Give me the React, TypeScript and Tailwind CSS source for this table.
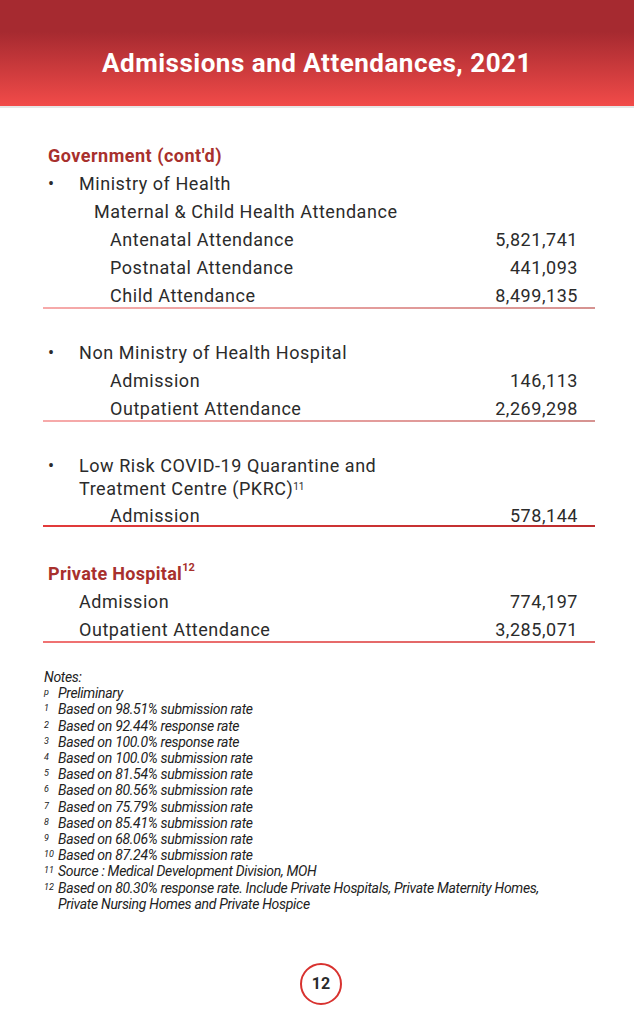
import React from "react"

const ROW = "flex h-[28px] items-center justify-between"

type Line = "soft" | "red" | "rose"

const LINE_CLASS: Record<Line, string> = {
  soft: "-mt-[2px] h-[2px] w-full bg-gradient-to-r from-[#f7aaaa] to-[#d69391]",
  red: "-mt-[2px] h-[2px] w-full bg-gradient-to-r from-[#e33b3b] to-[#bb2d2e]",
  rose: "-mt-[2px] h-[2px] w-full bg-gradient-to-r from-[#f07272] to-[#de6464]",
}

const Row = ({ label, value, indent }: { label: string; value: string; indent: string }) => (
  <div className={ROW}>
    <span className={indent}>{label}</span>
    <span className="pr-[17px]">{value}</span>
  </div>
)

const Bullet = ({ children }: { children: React.ReactNode }) => (
  <div className="flex">
    <span className="w-[36px] shrink-0 pl-[5px]">•</span>
    <span>{children}</span>
  </div>
)

const notes: [string, string][] = [
  ["p", "Preliminary"],
  ["1", "Based on 98.51% submission rate"],
  ["2", "Based on  92.44% response rate"],
  ["3", "Based on 100.0% response rate"],
  ["4", "Based on 100.0% submission rate"],
  ["5", "Based on 81.54% submission rate"],
  ["6", "Based on 80.56% submission rate"],
  ["7", "Based on 75.79% submission rate"],
  ["8", "Based on 85.41% submission rate"],
  ["9", "Based on 68.06% submission rate"],
  ["10", "Based on 87.24% submission rate"],
  ["11", "Source : Medical Development Division, MOH"],
  [
    "12",
    "Based on 80.30% response rate. Include Private Hospitals, Private Maternity Homes, Private Nursing Homes and Private Hospice",
  ],
]

export default function App() {
  return (
    <div className="min-h-[1024px] w-[634px] bg-white font-['Roboto',sans-serif] text-[#2b2b2b]">
      {/* Bandeau */}
      <header className="flex h-[108px] items-center justify-center border-b-2 border-[#e6e6e6] bg-gradient-to-b from-[#a62a30] from-30% to-[#f24b49] pt-[20px]">
        <h1 className="text-[26px] font-bold tracking-[0.5px] text-white">
          Admissions and Attendances, 2021
        </h1>
      </header>

      <main className="pl-[43px] pr-[39px] text-[18px] tracking-[0.55px]">
        <div className="mt-[33px] flex h-[28px] items-center pl-[5px] font-bold tracking-[0.5px] text-[#a8302d]">
          Government (cont'd)
        </div>
        <div className="flex h-[28px] items-center">
          <Bullet>Ministry of Health</Bullet>
        </div>
        <div className="flex h-[28px] items-center pl-[51px]">Maternal &amp; Child Health Attendance</div>
        <Row label="Antenatal Attendance" value="5,821,741" indent="pl-[67px]" />
        <Row label="Postnatal Attendance" value="441,093" indent="pl-[67px]" />
        <Row label="Child Attendance" value="8,499,135" indent="pl-[67px]" />
        <div className={LINE_CLASS.soft} />

        <div className="mt-[29px] flex h-[28px] items-center">
          <Bullet>Non Ministry of Health Hospital</Bullet>
        </div>
        <Row label="Admission" value="146,113" indent="pl-[67px]" />
        <Row label="Outpatient Attendance" value="2,269,298" indent="pl-[67px]" />
        <div className={LINE_CLASS.soft} />

        <div className="mt-[32px] leading-[23px]">
          <Bullet>
            Low Risk COVID-19 Quarantine and
            <br />
            Treatment Centre (PKRC)
            <sup className="text-[10px] tracking-normal">11</sup>
          </Bullet>
        </div>
        <div className="mt-[3px] flex h-[24px] items-center justify-between">
          <span className="pl-[67px]">Admission</span>
          <span className="pr-[17px]">578,144</span>
        </div>
        <div className={LINE_CLASS.red} />

        <div className="mt-[32px] flex h-[28px] items-center pl-[5px] font-bold tracking-[0.3px] text-[#a8302d]">
          Private Hospital<sup className="text-[11px] tracking-normal">12</sup>
        </div>
        <Row label="Admission" value="774,197" indent="pl-[36px]" />
        <Row label="Outpatient Attendance" value="3,285,071" indent="pl-[36px]" />
        <div className={LINE_CLASS.rose} />
      </main>

      {/* Notes */}
      <section className="mt-[26px] pl-[44px] text-[14px] italic leading-[16.2px] tracking-[-0.3px] text-[#222]">
        <div>Notes:</div>
        {notes.map(([mark, text]) => (
          <div key={mark} className="flex">
            <span className="w-[14px] shrink-0 pt-[1px] text-[9px] leading-[12px] tracking-normal">{mark}</span>
            <span className="max-w-[492px]">{text}</span>
          </div>
        ))}
      </section>

      <footer className="mt-[51px] flex justify-center pl-[8px]">
        <div className="flex h-[42px] w-[42px] items-center justify-center rounded-full border-2 border-[#d8322f] text-[16px] font-bold text-[#2b2b2b]">
          12
        </div>
      </footer>
    </div>
  )
}
